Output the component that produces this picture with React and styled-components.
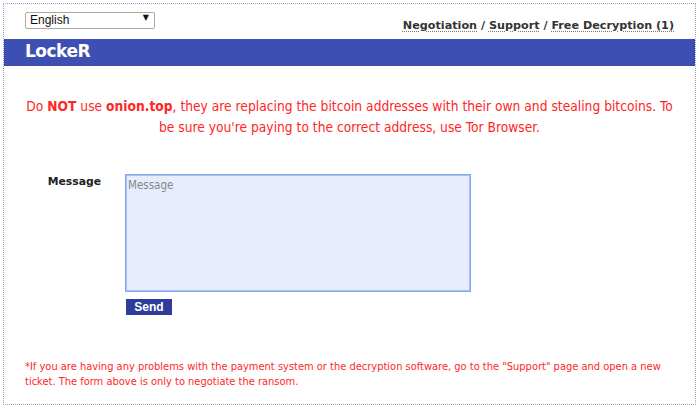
import React from 'react';
import styled, { createGlobalStyle } from 'styled-components';

const Global = createGlobalStyle`
  html, body {
    margin: 0;
    padding: 0;
    background: #fff;
  }
`;

const Frame = styled.div`
  box-sizing: border-box;
  width: 693px;
  height: 402px;
  margin: 3px 0 0 3px;
  border: 1px dotted #9aa3c8;
  font-family: "DejaVu Sans", Verdana, sans-serif;
`;

const TopBar = styled.div`
  display: flex;
  justify-content: space-between;
  align-items: flex-start;
  height: 35px;
  padding: 5px 21px 0 21px;
  box-sizing: border-box;
`;

const SelectWrap = styled.div`
  position: relative;
  width: 130px;
  height: 17px;
`;

const Select = styled.select`
  appearance: none;
  width: 100%;
  height: 100%;
  margin: 0;
  padding: 0 0 0 4px;
  border: 1px solid #a9a9a9;
  border-radius: 2px;
  background: #fff;
  font-family: "Liberation Sans", Arial, sans-serif;
  font-size: 12px;
  color: #111;
`;

const Arrow = styled.span`
  position: absolute;
  right: 6px;
  top: 4px;
  font-size: 8px;
  color: #111;
  pointer-events: none;
`;

const Nav = styled.div`
  padding-top: 10px;
  font-size: 11.2px;
  font-weight: bold;
  color: #333;
`;

const NavLink = styled.a`
  color: #333;
  text-decoration: underline dotted #777;
  text-underline-offset: 2px;
`;

const Banner = styled.div`
  height: 26px;
  background: #3e4fb3;
  border-bottom: 1px solid #3a4aa8;
  padding-left: 21px;
  color: #fff;
  font-size: 17px;
  font-weight: bold;
  line-height: 25px;
  letter-spacing: -0.5px;
`;

const Warning = styled.p`
  margin: 30px 18px 0;
  text-align: center;
  color: #ff2626;
  font-family: "DejaVu Sans Condensed", "DejaVu Sans", sans-serif;
  font-size: 13.7px;
  line-height: 21px;

  strong {
    font-weight: bold;
  }
`;

const Form = styled.form`
  display: grid;
  grid-template-columns: 121px 346px;
  row-gap: 7px;
  margin-top: 36px;
`;

const Label = styled.label`
  justify-self: end;
  padding: 1px 24px 0 0;
  font-size: 10.8px;
  font-weight: bold;
  color: #222;
`;

const TextArea = styled.textarea`
  box-sizing: border-box;
  width: 346px;
  height: 118px;
  margin: 0;
  padding: 3px 2px;
  resize: none;
  border: 1px solid #86a6ee;
  box-shadow: inset 0 0 0 1px #a9c0f4;
  background: #e7edfd;
  font-family: "DejaVu Sans Condensed", "DejaVu Sans", sans-serif;
  font-size: 11.5px;
  outline: none;

  &::placeholder {
    color: #888;
  }
`;

const SendButton = styled.button`
  grid-column: 2;
  justify-self: start;
  width: 46px;
  height: 16px;
  margin-left: 1px;
  padding: 0;
  border: none;
  background: #2e3c9c;
  color: #fff;
  font-family: "Liberation Sans", Arial, sans-serif;
  font-size: 12px;
  font-weight: bold;
  line-height: 16px;
`;

const Note = styled.p`
  margin: 44px 21px 0;
  color: #ff2626;
  font-family: "DejaVu Sans Condensed", "DejaVu Sans", sans-serif;
  font-size: 11px;
  line-height: 15px;
`;

export default function App() {
  return (
    <>
      <Global />
      <Frame>
        <TopBar>
          <SelectWrap>
            <Select defaultValue="en">
              <option value="en">English</option>
            </Select>
            <Arrow>▼</Arrow>
          </SelectWrap>
          <Nav>
            <NavLink href="#negotiation">Negotiation</NavLink> / <NavLink href="#support">Support</NavLink> /{' '}
            <NavLink href="#free">Free Decryption (1)</NavLink>
          </Nav>
        </TopBar>
        <Banner>LockeR</Banner>
        <Warning>
          Do <strong>NOT</strong> use <strong>onion.top</strong>, they are replacing the bitcoin addresses with their own and
          stealing bitcoins. To be sure you're paying to the correct address, use Tor Browser.
        </Warning>
        <Form onSubmit={(e) => e.preventDefault()}>
          <Label htmlFor="msg">Message</Label>
          <TextArea id="msg" placeholder="Message" />
          <SendButton type="submit">Send</SendButton>
        </Form>
        <Note>
          *If you are having any problems with the payment system or the decryption software, go to the "Support" page and
          open a new ticket. The form above is only to negotiate the ransom.
        </Note>
      </Frame>
    </>
  );
}
